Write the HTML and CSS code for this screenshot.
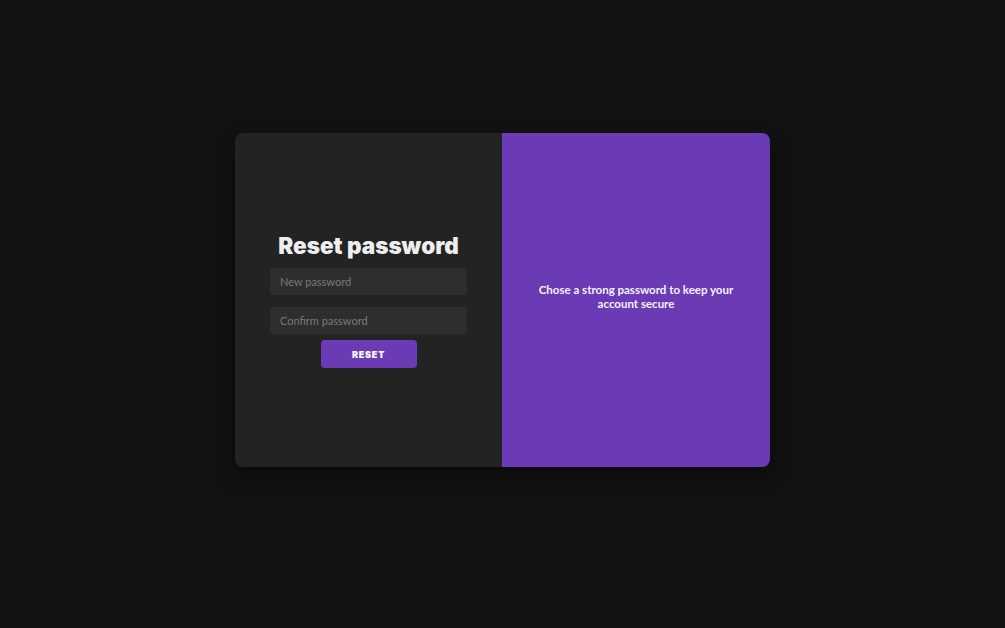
FILE: index.html
```html
<!DOCTYPE html>
<html lang="en">
<head>
  <meta charset="UTF-8">
  <title>Reset password</title>
  <link rel="stylesheet" href="styles.css">
</head>
<body>
<div class="card">
  <!--表单-->
  <form class="form-side">
    <h1>Reset password</h1>
    <input type="password" placeholder="New password">
    <input type="password" placeholder="Confirm password">
    <button type="button">Reset</button>
  </form>
  <!--说明-->
  <div class="info-side">
    <p>Chose a strong password to keep your account secure</p>
  </div>
</div>
</body>
</html>
```

FILE: styles.css
```css
* {
  margin: 0;
  padding: 0;
  box-sizing: border-box;
}

body {
  background: #121212;
  height: 628px;
  padding-bottom: 28px;
  display: flex;
  align-items: center;
  justify-content: center;
  font-family: Lato, "Noto Sans", sans-serif;
}

.card {
  width: 535px;
  height: 334px;
  display: flex;
  border-radius: 8px;
  overflow: hidden;
  box-shadow: 0 10px 20px rgba(0, 0, 0, .45);
}

.form-side {
  width: 267px;
  background: #232323;
  display: flex;
  flex-direction: column;
  align-items: center;
  justify-content: center;
}

.form-side h1 {
  color: #eeeeee;
  font-family: Inter, sans-serif;
  font-size: 22.5px;
  font-weight: 900;
  margin-bottom: 9px;
}

.form-side input {
  width: 197px;
  height: 27px;
  border: none;
  outline: none;
  border-radius: 4px;
  background: #2e2e2e;
  color: #ccc;
  font-family: inherit;
  font-size: 11px;
  padding: 0 10px;
  margin-bottom: 12px;
}

.form-side input::placeholder {
  color: #7a7a7a;
}

.form-side input:last-of-type {
  margin-bottom: 6px;
}

.form-side button {
  width: 96px;
  height: 28px;
  border: none;
  border-radius: 4px;
  background: #6a3bb5;
  color: #fff;
  font-family: Inter, sans-serif;
  font-size: 9px;
  font-weight: 900;
  letter-spacing: 0.8px;
  text-transform: uppercase;
}

.info-side {
  flex: 1;
  background: #6a3bb5;
  display: flex;
  align-items: center;
  justify-content: center;
  padding: 0 30px 6px;
}

.info-side p {
  color: #f6f2fc;
  font-size: 11.5px;
  font-weight: 700;
  line-height: 14px;
  text-align: center;
}
```
